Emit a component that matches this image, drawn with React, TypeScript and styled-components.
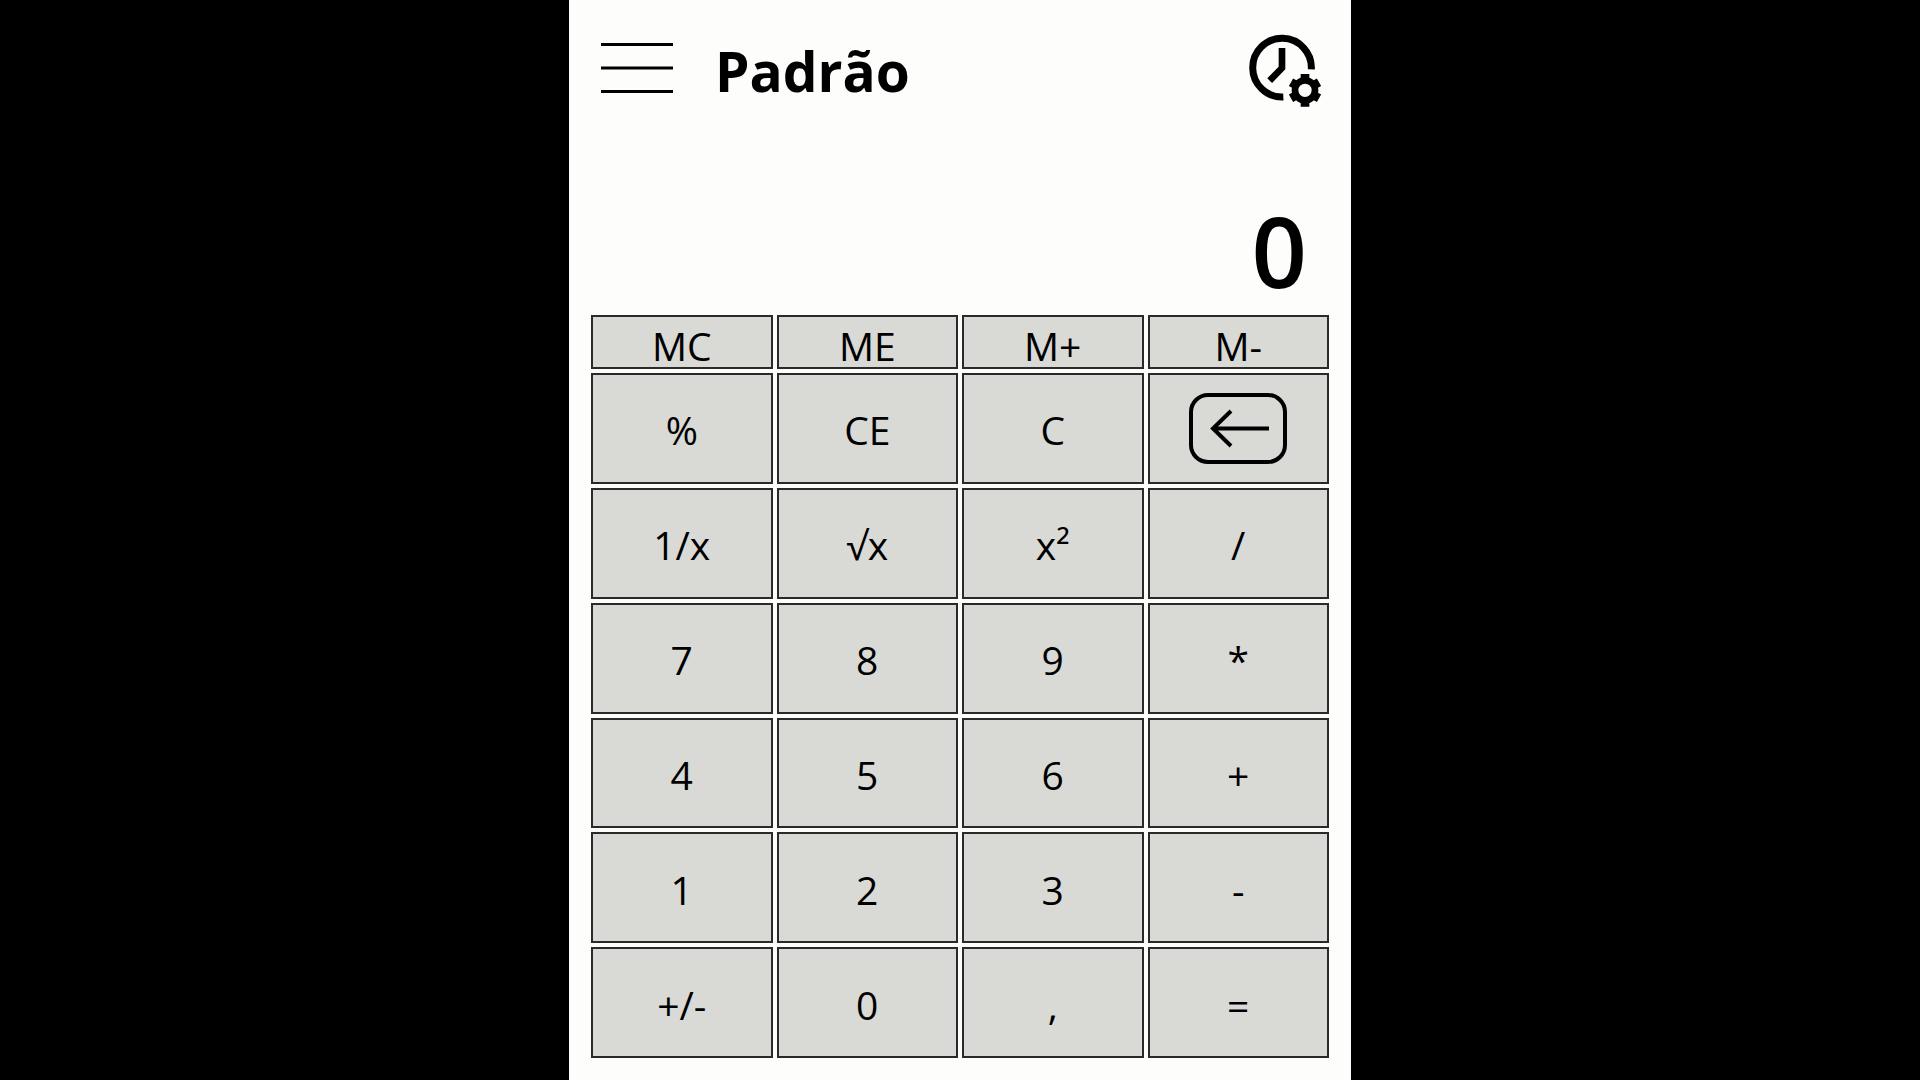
import React, { useState } from "react";
import styled, { createGlobalStyle } from "styled-components";

const GlobalStyle = createGlobalStyle`
  *, *::before, *::after { box-sizing: border-box; }
  body {
    margin: 0;
    background: #000;
    color: #000;
    font-family: "Open Sans", "Noto Sans", sans-serif;
  }
`;

const Calculator = styled.main`
  display: flex;
  flex-direction: column;
  width: 100%;
  max-width: 782px;
  min-height: 100vh;
  margin: 0 auto;
  padding: 31px 22px 22px;
  background: #fdfdfb;
`;

const Header = styled.header`
  display: flex;
  align-items: center;
  gap: 42px;
  height: 80px;
  padding: 0 7px 0 10px;
`;

const Title = styled.h1`
  flex: 1;
  margin: 0;
  font-size: 55px;
  line-height: 80px;
  font-weight: 700;
`;

const IconButton = styled.button`
  display: flex;
  padding: 0;
  border: 0;
  background: none;
  color: inherit;
  cursor: pointer;
`;

const MenuButton = styled(IconButton)`
  padding-bottom: 6px;
`;

const Display = styled.output`
  display: flex;
  flex: none;
  align-items: center;
  justify-content: flex-end;
  height: 204px;
  padding: 74px 22px 0 0;
  font-size: 97px;
  line-height: 120px;
  font-weight: 600;
`;

const Keypad = styled.section`
  display: grid;
  flex: 1;
  grid-template-columns: repeat(4, 1fr);
  grid-template-rows: 54px repeat(6, 1fr);
  gap: 4px;
`;

const Key = styled.button`
  display: flex;
  align-items: center;
  justify-content: center;
  min-width: 0;
  padding: 4px 0 0;
  border: 2px solid #2a2a2a;
  border-radius: 0;
  background: #d9d9d6;
  color: #000;
  font: 400 39px/40px "Open Sans", "Noto Sans", sans-serif;
  cursor: pointer;

  &:active {
    background: #c4c4c1;
  }
`;

const MemoryKey = styled(Key)`
  padding-top: 8px;
`;

const IconKey = styled(Key)`
  padding-top: 0;
`;

const MenuIcon = () => (
  <svg width="72" height="52" viewBox="0 0 72 52" stroke="currentColor" strokeWidth="3" aria-hidden="true">
    <path d="M0 2.5H72M0 26H72M0 49.5H72" />
  </svg>
);

const HistoryIcon = () => (
  <svg width="74" height="76" viewBox="145 100 222 228" fill="none" stroke="currentColor" aria-hidden="true">
    <path d="M335 209A88 88 0 1 0 251 292" strokeWidth="21" />
    <path d="M247 145V205L210 243" strokeWidth="20" />
    <circle cx="316" cy="272" r="30" strokeWidth="20" />
    <path
      d="M316 242V223M316 302V321M290 257L274 248M342 257L358 248M290 287L274 296M342 287L358 296"
      strokeWidth="26"
    />
  </svg>
);

const BackspaceIcon = () => (
  <svg width="98" height="71" viewBox="0 0 98 71" fill="none" stroke="currentColor" aria-hidden="true">
    <rect x="2" y="2" width="94" height="67" rx="17" strokeWidth="4" />
    <path d="M80 35.5H24M42 18L24 35.5L42 53" strokeWidth="4" />
  </svg>
);

const MEMORY_KEYS = ["MC", "ME", "M+", "M-"];
const KEYS = [
  "%", "CE", "C", "⌫",
  "1/x", "√x", "x²", "/",
  "7", "8", "9", "*",
  "4", "5", "6", "+",
  "1", "2", "3", "-",
  "+/-", "0", ",", "=",
];

export default function App() {
  const [value, setValue] = useState("0");

  const press = (key: string) => {
    if (/^\d$/.test(key)) setValue((v) => (v === "0" ? key : v + key));
    else if (key === ",") setValue((v) => (v.includes(",") ? v : v + ","));
    else if (key === "C" || key === "CE") setValue("0");
    else if (key === "⌫") setValue((v) => v.slice(0, -1) || "0");
  };

  return (
    <>
      <GlobalStyle />
      <Calculator>
        <Header>
          <MenuButton type="button" aria-label="Menu"><MenuIcon /></MenuButton>
          <Title>Padrão</Title>
          <IconButton type="button" aria-label="Histórico"><HistoryIcon /></IconButton>
        </Header>
        <Display>{value}</Display>
        <Keypad>
          {MEMORY_KEYS.map((key) => (
            <MemoryKey key={key} type="button">{key}</MemoryKey>
          ))}
          {KEYS.map((key) =>
            key === "⌫" ? (
              <IconKey key={key} type="button" aria-label="Apagar" onClick={() => press(key)}>
                <BackspaceIcon />
              </IconKey>
            ) : (
              <Key key={key} type="button" onClick={() => press(key)}>{key}</Key>
            )
          )}
        </Keypad>
      </Calculator>
    </>
  );
}
